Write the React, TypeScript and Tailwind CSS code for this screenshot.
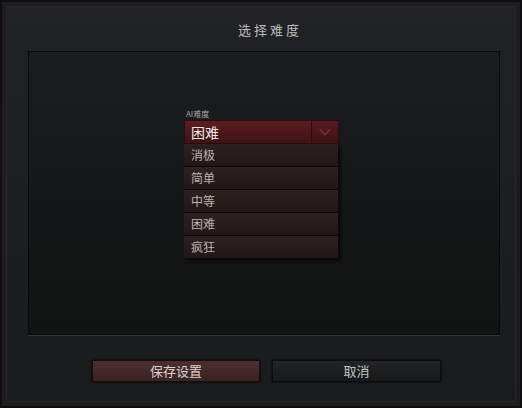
import { ChevronDown } from 'lucide-react';

const options = ['消极', '简单', '中等', '困难', '疯狂'];

const cjk = { fontFamily: '"Noto Sans CJK SC", "Noto Sans", sans-serif' };

export default function App() {
  return (
    <div className="w-[522px] h-[408px] bg-[#0e0f10] p-[2px]" style={cjk}>
      <div className="h-full border border-[#2b1618] bg-[#1c1d1f] p-[3px]">
        <div className="h-full flex flex-col border border-[#26272a] bg-gradient-to-b from-[#212225] to-[#1a1b1d]">
          {/* title */}
          <div className="h-[44px] flex items-center justify-center pl-[18px]">
            <span className="text-[13px] tracking-[3px] text-[#bdbdbd] pt-[1px]">选择难度</span>
          </div>

          {/* main panel */}
          <div className="ml-[21px] w-[472px] h-[284px] border border-[#0a0a0b] shadow-[0_1px_0_#34353a] bg-gradient-to-b from-[#1c1d1f] via-[#161718] to-[#111212]">
            <div className="ml-[155px] mt-[57px] w-[155px]">
              <div className="text-[8px] leading-[10px] text-[#a9a9a9] pl-[2px] mb-[1px]">AI难度</div>
              <div className="h-[24px] flex bg-gradient-to-b from-[#5e1d20] to-[#3d1315] border border-[#2a0c0d]">
                <div className="flex-1 flex items-center pl-[6px] text-[14px] text-[#eee6e6]">困难</div>
                <div className="w-[27px] border-l border-[#2a0c0d] flex items-center justify-center bg-gradient-to-b from-[#561b1e] to-[#3d1315]">
                  <ChevronDown className="w-[20px] h-[20px] text-[#7e3136]" strokeWidth={1.6} />
                </div>
              </div>
              <div className="shadow-[2px_2px_3px_rgba(0,0,0,0.6)]">
                {options.map((o) => (
                  <div
                    key={o}
                    className="h-[23px] flex items-center pl-[7px] text-[12px] text-[#bcb3b3] bg-gradient-to-b from-[#2e2122] to-[#221718] border-b border-r border-[#0b0808]"
                  >
                    {o}
                  </div>
                ))}
              </div>
            </div>
          </div>

          {/* buttons */}
          <div className="flex gap-[12px] ml-[85px] mt-[25px]">
            <button className="w-[168px] h-[22px] text-[13px] text-[#ddd2d2] bg-gradient-to-b from-[#4d2e2e] to-[#3a2323] border border-[#150c0c] shadow-[0_0_2px_#000]">
              保存设置
            </button>
            <button className="w-[169px] h-[22px] text-[13px] text-[#c4c4c4] bg-gradient-to-b from-[#222325] to-[#18191a] border border-[#0c0c0d] shadow-[0_0_2px_#000]">
              取消
            </button>
          </div>
        </div>
      </div>
    </div>
  );
}
